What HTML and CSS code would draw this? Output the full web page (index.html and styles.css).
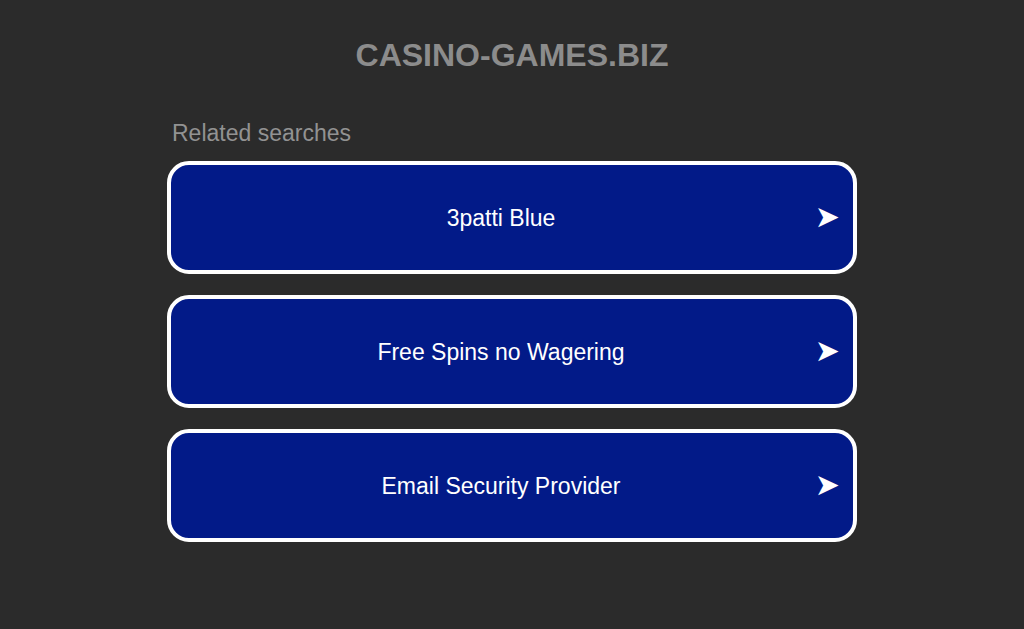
FILE: index.html
```html
<!DOCTYPE html>
<html>
<head>
<meta charset="utf-8">
<link rel="stylesheet" href="styles.css">
</head>
<body>
<div class="page">
  <h1 class="domain">CASINO-GAMES.BIZ</h1>
  <div class="related">
    <div class="related-title">Related searches</div>
    <a class="link" href="#"><span class="label">3patti Blue</span><span class="arrow">➤</span></a>
    <a class="link" href="#"><span class="label">Free Spins no Wagering</span><span class="arrow">➤</span></a>
    <a class="link" href="#"><span class="label">Email Security Provider</span><span class="arrow">➤</span></a>
  </div>
</div>
</body>
</html>
```
FILE: styles.css
```css
html, body {
  margin: 0;
  padding: 0;
  background: #2b2b2b;
  font-family: "Liberation Sans", Arial, sans-serif;
}
.page {
  display: flex;
  flex-direction: column;
  align-items: center;
}
.domain {
  margin: 37px 0 0;
  font-size: 32px;
  font-weight: bold;
  color: #8c8c8c;
  line-height: 36px;
}
.related {
  width: 690px;
  margin-top: 47px;
  display: flex;
  flex-direction: column;
  gap: 21px;
}
.related-title {
  color: #929292;
  font-size: 23px;
  line-height: 26px;
  padding-left: 5px;
  margin-bottom: -6px;
}
.link {
  box-sizing: border-box;
  height: 113px;
  border: 4px solid #ffffff;
  border-radius: 22px;
  background: #021a88;
  color: #ffffff;
  text-decoration: none;
  display: flex;
  align-items: center;
  justify-content: center;
  position: relative;
  font-size: 23px;
}
.label {
  margin-left: -22px;
  padding-top: 2px;
}
.arrow {
  position: absolute;
  right: 13px;
  top: 50%;
  transform: translateY(calc(-50% - 2px));
  font-family: "DejaVu Sans", sans-serif;
  font-size: 30px;
}
```
